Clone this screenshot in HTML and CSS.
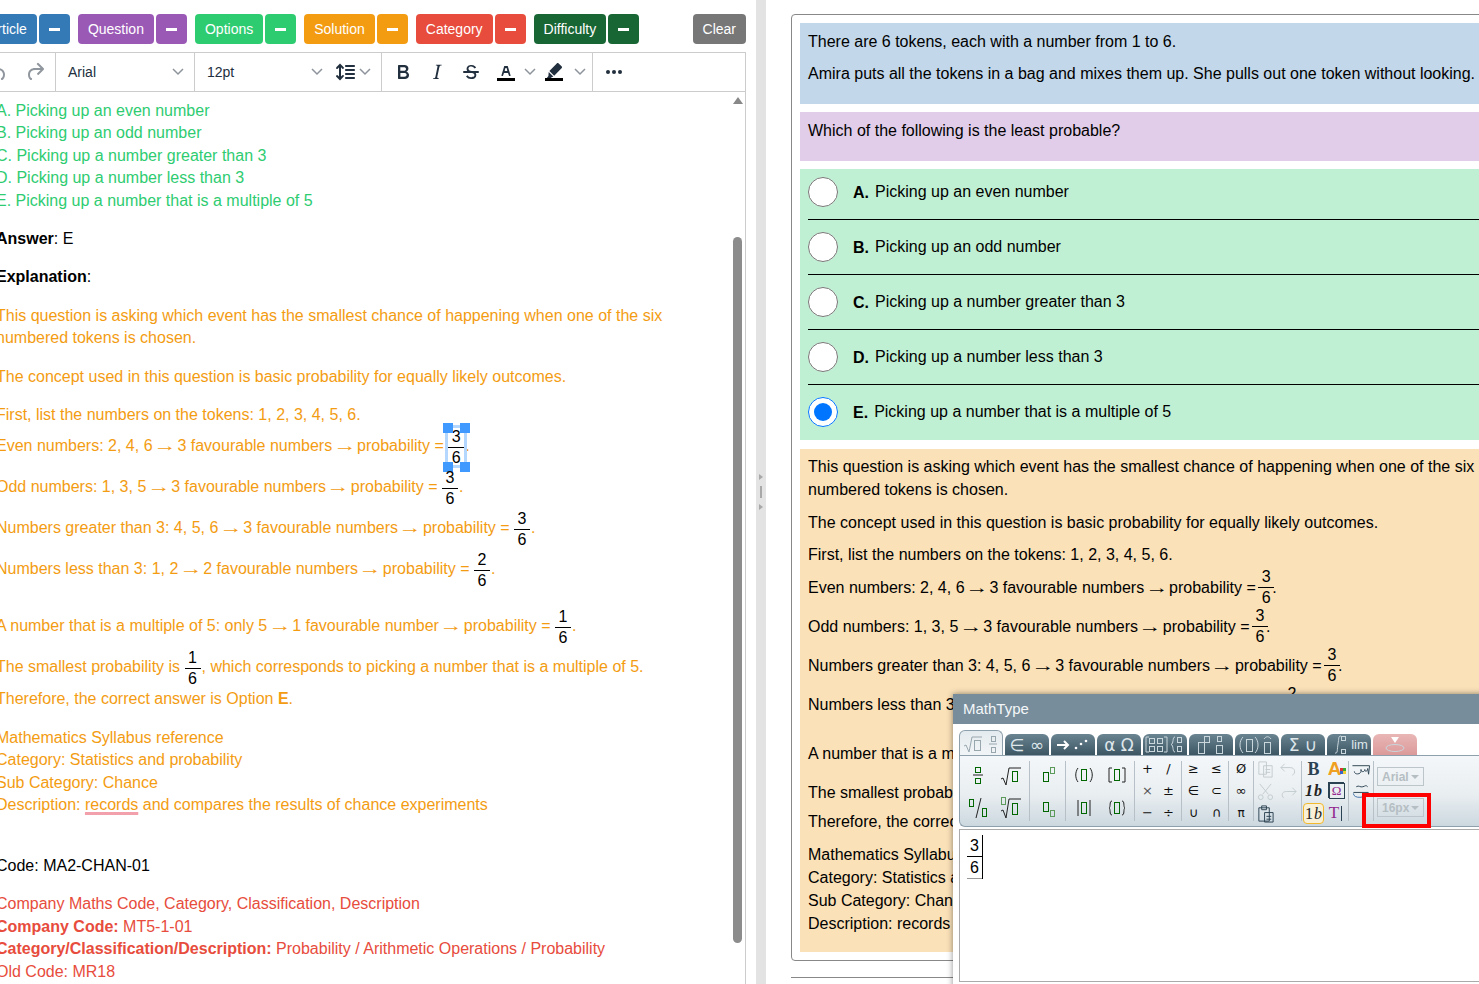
FILE: index.html
```html
<!DOCTYPE html>
<html>
<head>
    <title>Question Editor</title>
    <link rel="stylesheet" href="styles.css">
</head>
<body>
    <div class="left-pane">
        <div class="btn-row">
            <div class="btn-group blue"><button>Article</button><button class="minus"><span></span></button></div>
            <div class="btn-group purple"><button>Question</button><button class="minus"><span></span></button></div>
            <div class="btn-group green"><button>Options</button><button class="minus"><span></span></button></div>
            <div class="btn-group orange"><button>Solution</button><button class="minus"><span></span></button></div>
            <div class="btn-group red"><button>Category</button><button class="minus"><span></span></button></div>
            <div class="btn-group dark"><button>Difficulty</button><button class="minus"><span></span></button></div>
            <div class="btn-group grey clear"><button>Clear</button></div>
        </div>

        <div class="toolbar">
            <div class="tb-group history">
                <svg class="ic off" viewBox="0 0 24 24"><path d="M6.4 8H12c3.7 0 6.2 2 6.8 5.1.6 2.7-.4 5.6-2.3 6.8a1 1 0 0 1-1-1.8c1.1-.6 1.8-2.7 1.4-4.6-.5-2.1-2.1-3.5-4.9-3.5H6.4l3.3 3.3a1 1 0 1 1-1.4 1.4l-5-5a1 1 0 0 1 0-1.4l5-5a1 1 0 0 1 1.4 1.4L6.4 8z"/></svg>
                <svg class="ic off" viewBox="0 0 24 24"><path d="M17.6 10H12c-2.8 0-4.4 1.4-4.9 3.5-.4 2 .3 4 1.4 4.6a1 1 0 1 1-1 1.8c-2-1.2-2.9-4.1-2.3-6.8.6-3 3-5.1 6.8-5.1h5.6l-3.3-3.3a1 1 0 1 1 1.4-1.4l5 5a1 1 0 0 1 0 1.4l-5 5a1 1 0 0 1-1.4-1.4l3.3-3.3z"/></svg>
            </div>
            <div class="tb-select font-select"><span>Arial</span><svg class="chev" viewBox="0 0 14 10"><path d="M2 2l5 5 5-5"/></svg></div>
            <div class="tb-group size-group">
                <div class="tb-select size-select"><span>12pt</span><svg class="chev" viewBox="0 0 14 10"><path d="M2 2l5 5 5-5"/></svg></div>
                <svg class="ic line-ic" viewBox="0 0 24 24"><path d="M21 5a1 1 0 0 1 .1 2H13a1 1 0 0 1-.1-2H21zm0 4a1 1 0 0 1 .1 2H13a1 1 0 0 1-.1-2H21zm0 4a1 1 0 0 1 .1 2H13a1 1 0 0 1-.1-2H21zm0 4a1 1 0 0 1 .1 2H13a1 1 0 0 1-.1-2H21zM7 3.6l3.7 3.7a1 1 0 0 1-1.3 1.5h-.1L8 7.3v9.2l1.3-1.3a1 1 0 0 1 1.3 0h.1c.4.4.4 1 0 1.3v.1L7 20.4l-3.7-3.7a1 1 0 0 1 1.3-1.5h.1L6 16.5V7.4L4.7 8.7a1 1 0 0 1-1.3 0h-.1a1 1 0 0 1 0-1.3v-.1L7 3.6z"/></svg>
                <svg class="chev" viewBox="0 0 14 10"><path d="M2 2l5 5 5-5"/></svg>
            </div>
            <div class="tb-group format-group">
                <span class="tb-btn"><svg class="ic" viewBox="0 0 24 24"><path d="M7.8 19c-.3 0-.5 0-.6-.2l-.2-.5V5.7c0-.2 0-.4.2-.5l.6-.2h5c1.5 0 2.7.3 3.5 1 .7.6 1.1 1.4 1.1 2.5a3 3 0 0 1-.6 1.9c-.4.6-1 1-1.6 1.2.4.1.9.3 1.3.6s.8.7 1 1.2c.4.4.5 1 .5 1.6 0 1.3-.4 2.3-1.3 3-.8.7-2.1 1-3.8 1H7.8zm5-8.3c.6 0 1.2-.1 1.6-.5.4-.3.6-.7.6-1.3 0-1.1-.8-1.7-2.3-1.7H9.3v3.5h3.4zm.5 6c.7 0 1.3-.1 1.7-.4.4-.4.6-.9.6-1.5s-.2-1-.7-1.4c-.4-.3-1-.4-2-.4H9.4v3.8h4z"/></svg></span>
                <span class="tb-btn"><svg class="ic" viewBox="0 0 24 24"><path d="M16.7 4.7l-.1.9h-.3c-.6 0-1 0-1.4.3-.3.3-.4.6-.5 1.1l-2.1 9.8v.6c0 .5.4.8 1.4.8h.2l-.2.8H8l.2-.8h.2c1.1 0 1.8-.5 2-1.5l2-9.8.1-.5c0-.6-.4-.8-1.4-.8h-.3l.2-.9h5.8z"/></svg></span>
                <span class="tb-btn"><svg class="ic" viewBox="0 0 24 24"><path d="M15.6 8.5c-.5-.7-1-1.1-1.3-1.3-.6-.4-1.3-.6-2-.6-2.7 0-2.8 1.7-2.8 2.1 0 1.6 1.8 2 3.2 2.3 4.4.9 4.6 2.8 4.6 3.9 0 1.4-.7 4.1-5 4.1A6.2 6.2 0 0 1 7 16.4l1.5-1.1c.4.6 1.6 2 3.7 2 1.6 0 2.5-.4 3-1.2.4-.8.3-2-.8-2.6-.7-.4-1.6-.7-2.9-1-1-.2-3.9-.8-3.9-3.6C7.6 6 10.3 5 12.4 5c2.9 0 4.2 1.6 4.7 2.4l-1.5 1.1z"/><path d="M5 11h14a1 1 0 0 1 0 2H5a1 1 0 0 1 0-2z"/></svg></span>
                <span class="tb-btn spaced"><svg class="ic" viewBox="0 0 24 24"><path d="M8.7 16h-.8a.5.5 0 0 1-.5-.6l2.7-9c.1-.3.3-.4.5-.4h2.8c.2 0 .4.1.5.4l2.7 9a.5.5 0 0 1-.5.6h-.8a.5.5 0 0 1-.4-.4l-.7-2.2c0-.3-.3-.4-.5-.4h-3.4c-.2 0-.4.1-.5.4l-.7 2.2c0 .3-.2.4-.4.4zm2.6-7.6l-.6 2a.5.5 0 0 0 .5.6h1.6a.5.5 0 0 0 .5-.6l-.6-2c0-.3-.3-.4-.5-.4h-.4c-.2 0-.4.1-.5.4z"/><path class="black" d="M3 18h18v3H3z"/></svg></span>
                <svg class="chev" viewBox="0 0 14 10"><path d="M2 2l5 5 5-5"/></svg>
                <span class="tb-btn"><svg class="ic" viewBox="0 0 24 24"><path d="M16.4 3.3l3.4 3.3c.4.4.4 1 0 1.4l-7.6 7.7-4.8-4.8 7.6-7.6c.4-.4 1-.4 1.4 0zM6.7 11.9l4.6 4.6-2 .9-1.1 1H4.4l2-2.4.3-4.1z"/><path class="black" d="M3 18h18v3H3z"/></svg></span>
                <svg class="chev last" viewBox="0 0 14 10"><path d="M2 2l5 5 5-5"/></svg>
            </div>
            <div class="tb-group more-group">
                <svg class="ic" viewBox="0 0 24 24"><circle cx="6" cy="12" r="2"/><circle cx="12" cy="12" r="2"/><circle cx="18" cy="12" r="2"/></svg>
            </div>
        </div>

        <div class="editor">
            <p class="c-green">A. Picking up an even number<br>B. Picking up an odd number<br>C. Picking up a number greater than 3<br>D. Picking up a number less than 3<br>E. Picking up a number that is a multiple of 5</p>
            <p><b>Answer</b>: E</p>
            <p><b>Explanation</b>:</p>
            <p class="c-orange">This question is asking which event has the smallest chance of happening when one of the six numbered tokens is chosen.</p>
            <p class="c-orange">The concept used in this question is basic probability for equally likely outcomes.</p>
            <p class="c-orange">First, list the numbers on the tokens: 1, 2, 3, 4, 5, 6.<br>
                Even numbers: 2, 4, 6 <span class="arr">→</span> 3 favourable numbers <span class="arr">→</span> probability = <span class="frac selected"><i>3</i><i>6</i><em class="h1"></em><em class="h2"></em><em class="h3"></em><em class="h4"></em></span>.<br>
                Odd numbers: 1, 3, 5 <span class="arr">→</span> 3 favourable numbers <span class="arr">→</span> probability = <span class="frac"><i>3</i><i>6</i></span>.<br>
                Numbers greater than 3: 4, 5, 6 <span class="arr">→</span> 3 favourable numbers <span class="arr">→</span> probability = <span class="frac"><i>3</i><i>6</i></span>.<br>
                Numbers less than 3: 1, 2 <span class="arr">→</span> 2 favourable numbers <span class="arr">→</span> probability = <span class="frac"><i>2</i><i>6</i></span>.</p>
            <p class="c-orange">A number that is a multiple of 5: only 5 <span class="arr">→</span> 1 favourable number <span class="arr">→</span> probability = <span class="frac"><i>1</i><i>6</i></span>.<br>
                The smallest probability is <span class="frac"><i>1</i><i>6</i></span>, which corresponds to picking a number that is a multiple of 5.<br>
                Therefore, the correct answer is Option <b>E</b>.</p>
            <p class="c-orange">Mathematics Syllabus reference<br>Category: Statistics and probability<br>Sub Category: Chance<br>Description: <span class="spell">records</span> and compares the results of chance experiments<br>&nbsp;</p>
            <p>Code: MA2-CHAN-01</p>
            <p class="c-red">Company Maths Code, Category, Classification, Description<br><b>Company Code:</b> MT5-1-01<br><b>Category/Classification/Description:</b> Probability / Arithmetic Operations / Probability<br>Old Code: MR18</p>
        </div>

        <div class="scroll-arrow"></div>
        <div class="scroll-thumb"></div>
    </div>

    <div class="gutter">
        <span class="gutter-arrow"></span>
        <span class="gutter-handle"></span>
        <span class="gutter-arrow"></span>
    </div>

    <div class="right-pane">
        <div class="card">
            <div class="sec sec-blue">
                <p>There are 6 tokens, each with a number from 1 to 6.</p>
                <p>Amira puts all the tokens in a bag and mixes them up. She pulls out one token without looking.</p>
            </div>
            <div class="sec sec-purple">
                <p>Which of the following is the least probable?</p>
            </div>
            <div class="sec-options">
                <label class="opt"><input type="radio" name="ans"><b>A.</b><span>Picking up an even number</span></label>
                <label class="opt"><input type="radio" name="ans"><b>B.</b><span>Picking up an odd number</span></label>
                <label class="opt"><input type="radio" name="ans"><b>C.</b><span>Picking up a number greater than 3</span></label>
                <label class="opt"><input type="radio" name="ans"><b>D.</b><span>Picking up a number less than 3</span></label>
                <label class="opt"><input type="radio" name="ans" checked><b>E.</b><span>Picking up a number that is a multiple of 5</span></label>
            </div>
            <div class="sec sec-peach">
                <p>This question is asking which event has the smallest chance of happening when one of the six numbered tokens is chosen.</p>
                <p>The concept used in this question is basic probability for equally likely outcomes.</p>
                <p>First, list the numbers on the tokens: 1, 2, 3, 4, 5, 6.</p>
                <p class="mline mt-6">Even numbers: 2, 4, 6 <span class="arr">→</span> 3 favourable numbers <span class="arr">→</span> probability = <span class="frac"><i>3</i><i>6</i></span>.</p>
                <p class="mline">Odd numbers: 1, 3, 5 <span class="arr">→</span> 3 favourable numbers <span class="arr">→</span> probability = <span class="frac"><i>3</i><i>6</i></span>.</p>
                <p class="mline">Numbers greater than 3: 4, 5, 6 <span class="arr">→</span> 3 favourable numbers <span class="arr">→</span> probability = <span class="frac"><i>3</i><i>6</i></span>.</p>
                <p class="mline">Numbers less than 3: 1, 2 <span class="arr">→</span> 2 favourable numbers <span class="arr">→</span> probability = <span class="frac"><i>2</i><i>6</i></span>.</p>
                <p class="mline mt-20">A number that is a multiple of 5: only 5 <span class="arr">→</span> 1 favourable number <span class="arr">→</span> probability = <span class="frac"><i>1</i><i>6</i></span>.</p>
                <p class="mline">The smallest probability is <span class="frac"><i>1</i><i>6</i></span>, which corresponds to picking a number that is a multiple of 5.</p>
                <p class="mt-3">Therefore, the correct answer is Option E.</p>
                <p>Mathematics Syllabus reference<br>Category: Statistics and probability<br>Sub Category: Chance<br>Description: records and compares the results of chance experiments</p>
            </div>
        </div>
        <div class="rule"></div>
    </div>

    <div class="mathtype">
        <div class="mt-title">MathType</div>
        <div class="mt-tabs">
            <div class="tab active"><svg viewBox="0 0 44 24"><path d="M5 15l2-1 3 7 3-15h10"/><rect x="15" y="9" width="6" height="10"/><rect x="32" y="5" width="4" height="5"/><path d="M30 13h8"/><rect x="32" y="16" width="4" height="5"/></svg></div>
            <div class="tab glyph">∈ ∞</div>
            <div class="tab"><svg viewBox="0 0 44 21"><path class="thick" d="M6 11h11M13 7l4 4-4 4"/><circle class="dot" cx="25" cy="14" r="1.3"/><circle class="dot" cx="30" cy="10" r="1.3"/><circle class="dot" cx="35" cy="7" r="1.3"/></svg></div>
            <div class="tab glyph">α Ω</div>
            <div class="tab"><svg viewBox="0 0 44 21"><path d="M6 3H3v15h3M21 3h3v15h-3"/><rect x="6" y="4" width="5" height="5"/><rect x="14" y="4" width="5" height="5"/><rect x="6" y="12" width="5" height="5"/><rect x="14" y="12" width="5" height="5"/><path d="M32 3c-3 0-1 7-4 7.5 3 .5 1 7.5 4 7.5"/><rect x="34" y="3" width="4" height="5"/><rect x="34" y="12" width="4" height="5"/></svg></div>
            <div class="tab"><svg viewBox="0 0 44 21"><rect x="9" y="8" width="6" height="11"/><rect x="15" y="2" width="5" height="6"/><rect x="28" y="2" width="4" height="5"/><rect x="27" y="11" width="6" height="8"/></svg></div>
            <div class="tab"><svg viewBox="0 0 44 21"><path d="M8 3c-4 4-4 12 0 16M20 3c4 4 4 12 0 16"/><rect x="11" y="5" width="6" height="12"/><path d="M29 5c2-3 5-3 7 0"/><rect x="29" y="8" width="6" height="11"/></svg></div>
            <div class="tab glyph">Σ ∪</div>
            <div class="tab"><svg viewBox="0 0 24 21"><path d="M8 19c3 1 2-4 3-9s0-8 3-8"/><rect x="14" y="2" width="4" height="4"/><rect x="14" y="15" width="4" height="4"/></svg><span class="lim">lim</span></div>
            <div class="tab pink"><svg viewBox="0 0 44 21"><path class="fill" d="M18 3h8l-4 6z"/><ellipse cx="22" cy="14" rx="9" ry="3.5"/></svg></div>
        </div>
        <div class="mt-panel">
            <div class="tg g-1 two">
                <svg class="t" viewBox="0 0 30 30"><rect class="bx" x="12" y="7" width="5" height="5"/><path d="M10 15h10" class="ln"/><rect class="bx" x="12" y="18" width="5" height="5"/></svg>
                <svg class="t" viewBox="0 0 30 30"><path class="ln" d="M5 19l2-1 3 7 3-17h12"/><rect class="bx" x="16" y="11" width="5" height="10"/></svg>
                <svg class="t" viewBox="0 0 30 30"><rect class="bx" x="6" y="6" width="4" height="7"/><path class="ln" d="M18 5l-5 20"/><rect class="bx" x="19" y="15" width="4" height="8"/></svg>
                <svg class="t" viewBox="0 0 30 30"><rect class="bx lt" x="5" y="4" width="4" height="7"/><path class="ln" d="M5 18l2-1 3 8 3-19h12"/><rect class="bx" x="16" y="10" width="5" height="11"/></svg>
            </div>
            <span class="sep"></span>
            <div class="tg g-2 two">
                <svg class="t" viewBox="0 0 30 30"><rect class="bx" x="10" y="12" width="5" height="9"/><rect class="bx lt" x="17" y="7" width="4" height="6"/></svg>
                <svg class="t" viewBox="0 0 30 30"><rect class="bx" x="10" y="9" width="5" height="9"/><rect class="bx lt" x="17" y="17" width="4" height="6"/></svg>
            </div>
            <span class="sep"></span>
            <div class="tg g-3 two">
                <svg class="t" viewBox="0 0 30 30"><path class="ln" d="M9 8c-3 4-3 10 0 14M21 8c3 4 3 10 0 14"/><rect class="bx" x="12" y="9" width="5" height="11"/></svg>
                <svg class="t" viewBox="0 0 30 30"><path class="ln" d="M10 8H7v14h3M20 8h3v14h-3"/><rect class="bx" x="12" y="9" width="5" height="11"/></svg>
                <svg class="t" viewBox="0 0 30 30"><path class="ln" d="M9 7v16M21 7v16"/><rect class="bx" x="12" y="9" width="5" height="11"/></svg>
                <svg class="t" viewBox="0 0 30 30"><path class="ln" d="M10 8c-3 0-1 6-3 7 2 1 0 7 3 7M20 8c3 0 1 6 3 7-2 1 0 7-3 7"/><rect class="bx" x="12" y="9" width="5" height="11"/></svg>
            </div>
            <span class="sep"></span>
            <div class="tg g-4 sym"><span>+</span><span>/</span><span class="soft">×</span><span>±</span><span>−</span><span>÷</span></div>
            <span class="sep"></span>
            <div class="tg g-5 sym"><span>≥</span><span>≤</span><span>∈</span><span>⊂</span><span>∪</span><span>∩</span></div>
            <span class="sep"></span>
            <div class="tg g-6 sym"><span>Ø</span><span>∞</span><span class="small">π</span></div>
            <span class="sep"></span>
            <div class="tg g-7 sym">
                <svg class="s off-ic" viewBox="0 0 20 20"><path d="M3 2h8v13H3zM8 6h9v12H8zM10 10h5M10 13h5"/></svg>
                <svg class="s off-ic" viewBox="0 0 20 20"><path d="M6 4L2 8l4 4M2 8h10c5 0 6 6 2 8"/></svg>
                <svg class="s off-ic" viewBox="0 0 20 20"><path d="M4 2l9 11M16 2L7 13"/><circle cx="5" cy="16" r="2.5"/><circle cx="15" cy="16" r="2.5"/></svg>
                <svg class="s off-ic" viewBox="0 0 20 20"><path d="M14 6l4 4-4 4M18 10H8c-5 0-6 4-3 7"/></svg>
                <svg class="s on-ic" viewBox="0 0 20 20"><path d="M3 4h11v14H3zM6 2h5v4H6zM9 9h9v10H9zM11 13h5M11 16h5"/></svg>
            </div>
            <span class="sep"></span>
            <div class="tg g-8 sym">
                <span class="serif-b">B</span>
                <span class="color-a">A<em class="sq sq-r"></em><em class="sq sq-g"></em><em class="sq sq-b"></em><em class="sq sq-y"></em></span>
                <span class="one-b">1<i>b</i></span>
                <span class="omega">Ω</span>
                <span class="one-b picked">1<i>b</i></span>
                <span class="t-cursor">T<u></u></span>
            </div>
            <span class="sep"></span>
            <div class="tg g-9 sym">
                <svg class="s wide" viewBox="0 0 20 20"><path d="M1 6h18M3 12c0 4 7 3 7 0v-2c0 3 4 3 4 0 0 3 3 2 3-1l1 6 1-9"/></svg>
                <svg class="s wide" viewBox="0 0 20 20"><path d="M5 5c3-2 4 1 7 0s3-2 5 0M2 11h16"/><path class="blue-stroke" d="M2 12c0 6 13 5 16 0"/></svg>
            </div>
            <span class="sep"></span>
            <div class="dropdowns">
                <div class="dd">Arial<span></span></div>
                <div class="dd">16px<span></span></div>
            </div>
        </div>
        <div class="mt-editor">
            <span class="frac big"><i>3</i><i>6</i></span><span class="caret"></span>
        </div>
        <div class="red-box"></div>
    </div>
</body>
</html>
```

FILE: styles.css
```css
html, body {
    margin: 0;
    padding: 0;
    height: 100%;
}

body {
    position: relative;
    display: flex;
    width: 1479px;
    height: 984px;
    overflow: hidden;
    background-color: #fff;
    color: #000;
    font-family: "Liberation Sans", Arial, sans-serif;
    font-size: 16px;
}

p {
    margin: 0;
}

/* left: editor pane, scrolled a little to the right */
.left-pane {
    position: relative;
    flex: 0 0 756px;
    width: 756px;
    overflow: hidden;
    padding-top: 14px;
    box-sizing: border-box;
}

.btn-row {
    display: flex;
    gap: 8px;
    width: 768px;
    margin-left: -22px;
    height: 30px;
}

.btn-group {
    display: flex;
    gap: 2px;
}

.btn-group.clear {
    margin-left: auto;
}

.btn-group button {
    height: 30px;
    padding: 0 10px;
    border: none;
    border-radius: 4px;
    color: #fff;
    font-family: "Liberation Sans", Arial, sans-serif;
    font-size: 14px;
}

.btn-group .minus {
    width: 31px;
    padding: 0;
    display: flex;
    align-items: center;
    justify-content: center;
}

.minus span {
    width: 11px;
    height: 3px;
    background-color: #fff;
}

.blue button { background-color: #337ab7; }
.purple button { background-color: #9b59b6; }
.green button { background-color: #2ecc71; }
.orange button { background-color: #f39c12; }
.red button { background-color: #e74c3c; }
.dark button { background-color: #196635; }
.grey button { background-color: #777; }

.toolbar {
    display: flex;
    width: 776px;
    height: 40px;
    margin-top: 8px;
    margin-left: -30px;
    box-sizing: border-box;
    border: 1px solid #ccc;
    color: #222f3e;
    font-size: 14px;
}

.tb-group {
    display: flex;
    align-items: center;
    border-right: 1px solid #ccc;
    box-sizing: border-box;
}

.history {
    width: 85px;
    padding-left: 15px;
    gap: 13px;
}

.ic {
    width: 24px;
    height: 24px;
    flex: none;
    fill: #222f3e;
}

.ic.off {
    opacity: .5;
}

.ic .black {
    fill: #000;
}

.chev {
    width: 14px;
    height: 10px;
    flex: none;
    fill: none;
    stroke: #8d949c;
    stroke-width: 1.5;
}

.chev.last {
    margin-left: 2px;
}

.tb-select {
    display: flex;
    align-items: center;
    justify-content: space-between;
    box-sizing: border-box;
}

.font-select {
    width: 139px;
    padding: 0 9px 0 12px;
    border-right: 1px solid #ccc;
}

.size-group {
    width: 187px;
}

.size-select {
    width: 129px;
    padding-left: 12px;
}

.line-ic {
    margin-left: 9px;
    margin-right: 1px;
}

.format-group {
    width: 211px;
    padding-left: 4px;
}

.tb-btn {
    display: flex;
    justify-content: center;
    width: 34px;
}

.tb-btn.spaced {
    margin-left: 1px;
}

.more-group {
    padding-left: 9px;
    border-right: none;
}

.editor {
    width: 746px;
    height: 900px;
    box-sizing: border-box;
    padding: 8px 20px 0 0;
    border-right: 1px solid #ccc;
    line-height: 22.4px;
}

.editor p {
    margin: 0 0 16px -4px;
}

.c-green { color: #2ecc71; }
.c-orange { color: #f39c12; }
.c-red { color: #e74c3c; }

.spell {
    text-decoration: underline;
    text-decoration-color: #f2a0ac;
    text-decoration-thickness: 3px;
    text-underline-offset: 2px;
}

.arr {
    display: inline-block;
    transform: scaleX(1.45);
}

.frac {
    display: inline-flex;
    flex-direction: column;
    justify-content: center;
    width: 16px;
    height: 41px;
    vertical-align: 10px;
    color: #000;
    text-align: center;
    line-height: 20px;
}

.frac i {
    display: block;
    position: relative;
    top: 1px;
    font-style: normal;
    height: 20px;
}

.frac i:first-child {
    border-bottom: 1px solid #000;
}

.editor .frac {
    margin-right: 1px;
}

.frac.selected {
    position: relative;
}

.frac.selected::before {
    content: "";
    position: absolute;
    left: -3px;
    right: -3px;
    top: -1px;
    bottom: -1px;
    border: 3px solid #b4d7ff;
}

.frac.selected em {
    position: absolute;
    width: 10px;
    height: 10px;
    background-color: #4099ff;
}

.h1 { left: -5px; top: -3px; }
.h2 { right: -6px; top: -3px; }
.h3 { left: -5px; bottom: -5px; }
.h4 { right: -6px; bottom: -5px; }

.scroll-arrow {
    position: absolute;
    left: 733px;
    top: 97px;
    width: 0;
    height: 0;
    border-left: 5px solid transparent;
    border-right: 5px solid transparent;
    border-bottom: 7px solid #888;
}

.scroll-thumb {
    position: absolute;
    left: 733px;
    top: 237px;
    width: 9px;
    height: 706px;
    border-radius: 5px;
    background-color: #8c8c8c;
}

/* splitter */
.gutter {
    flex: 0 0 10px;
    display: flex;
    flex-direction: column;
    align-items: center;
    justify-content: center;
    gap: 6px;
    background-color: #e3e3e3;
}

.gutter-arrow {
    width: 0;
    height: 0;
    border-top: 3px solid transparent;
    border-bottom: 3px solid transparent;
    border-left: 4px solid #a8a8a8;
}

.gutter-handle {
    width: 2px;
    height: 12px;
    background-color: #a8a8a8;
}

/* right: preview */
.right-pane {
    flex: none;
    width: 713px;
    padding: 14px 0 0 25px;
    box-sizing: border-box;
    overflow: hidden;
    line-height: 1.42857;
}

.card {
    width: 720px;
    box-sizing: border-box;
    padding: 8px;
    border: 1px solid #888;
    border-radius: 4px;
    display: flex;
    flex-direction: column;
    gap: 8px;
}

.sec {
    width: 690px;
    box-sizing: border-box;
    padding: 8px 8px 18px;
}

.sec p + p {
    margin-top: 9.14px;
}

.sec-blue { background-color: #c2d7e9; }
.sec-purple { background-color: #e1cde9; }

.sec-peach {
    margin-top: 1px;
    padding: 6.5px 8px 17px;
    background-color: #fae1b8;
    line-height: 23px;
}

.sec-peach p + p {
    margin-top: 9.5px;
}

.sec-peach .mline + .mline {
    margin-top: 10px;
}

.sec-options {
    width: 690px;
    background-color: #c0f0d4;
}

.opt {
    display: flex;
    align-items: center;
    gap: 6px;
    height: 30px;
    margin-left: 8px;
    padding: 12px 0;
    border-bottom: 1px solid #000;
}

.opt:first-child {
    padding-top: 8px;
}

.opt:last-child {
    padding-bottom: 13px;
    border-bottom: none;
}

.opt input {
    width: 30px;
    height: 30px;
    margin: 0 9px 0 0;
}

.opt b {
    position: relative;
    top: 2px;
}

.opt span {
    position: relative;
    top: 1px;
}

.mline {
    height: 29px;
    line-height: 29px;
}

.sec .frac {
    margin: -6px -2px;
    vertical-align: middle;
}

.sec .frac i {
    top: -1px;
}

.sec-peach p.mt-6 { margin-top: 7px; }
.sec-peach .mline + .mline.mt-20 { margin-top: 20px; }
.sec-peach p.mt-3 { margin-top: 3px; }

.rule {
    width: 100%;
    height: 1px;
    margin-top: 16px;
    background-color: #888;
}

/* MathType dialog floats over the preview */
.mathtype {
    position: absolute;
    left: 953px;
    top: 694px;
    width: 560px;
    height: 300px;
    background-color: #fff;
    box-shadow: 0 0 6px rgba(0, 0, 0, .45);
}

.mt-title {
    height: 30px;
    padding-left: 10px;
    background-color: #778d9b;
    color: #f4f7f9;
    font-size: 15px;
    line-height: 30px;
}

.mt-tabs {
    position: relative;
    z-index: 1;
    display: flex;
    align-items: flex-end;
    gap: 2px;
    height: 25px;
    margin: 6px 0 0 6px;
}

.tab {
    display: flex;
    align-items: center;
    justify-content: center;
    width: 44px;
    height: 21px;
    border-radius: 6px 6px 0 0;
    background: linear-gradient(#6a8492, #3d5664);
    color: #dfe7eb;
    font-family: "DejaVu Sans", sans-serif;
    font-size: 17px;
    white-space: nowrap;
    box-sizing: border-box;
}

.tab svg {
    width: 44px;
    height: 21px;
    flex: none;
    fill: none;
    stroke: #c9d6dc;
    stroke-width: 1;
}

.tab rect {
    shape-rendering: crispEdges;
}

.tab .thick {
    stroke: #fff;
    stroke-width: 2;
}

.tab .dot, .tab .fill {
    fill: #fff;
    stroke: none;
}

.tab.active {
    height: 25px;
    border: 1px solid #8ea0ac;
    border-bottom: none;
    background: linear-gradient(#e4ebee, #f2f5f7);
}

.tab.active svg {
    height: 24px;
    stroke: #98a6ae;
}

.tab.pink {
    background: linear-gradient(#e9b6b6, #dc9a9a);
}

.tab:nth-child(9) svg {
    width: 24px;
}

.tab .lim {
    font-family: "Liberation Sans", sans-serif;
    font-size: 13px;
    margin-right: 3px;
}

.mt-panel {
    display: flex;
    align-items: flex-start;
    height: 72px;
    margin-left: 6px;
    box-sizing: border-box;
    border: 1px solid #8ea0ac;
    border-right: none;
    border-radius: 0 0 0 6px;
    background: linear-gradient(#f4f7f9, #e9eef1 55%, #ccd8df);
    font-family: "DejaVu Sans", sans-serif;
    color: #111;
}

.sep {
    flex: none;
    width: 1px;
    height: 60px;
    margin-top: 5px;
    background-color: #b6c0c6;
}

.tg {
    display: grid;
    flex: none;
    margin-top: 2px;
    justify-items: center;
    align-items: center;
}

.g-1 { width: 69px; padding-left: 1px; box-sizing: border-box; grid-template-columns: 33px 33px; }
.g-2 { width: 35px; grid-template-columns: 35px; }
.g-3 { width: 68px; grid-template-columns: 33px 33px; padding-left: 1px; box-sizing: border-box; }
.g-4 { width: 46px; grid-template-columns: 21px 21px; padding-left: 2px; box-sizing: border-box; }
.g-5 { width: 46px; grid-template-columns: 23px 23px; }
.g-6 { width: 24px; grid-template-columns: 24px; }
.g-7 { width: 47px; grid-template-columns: 23px 23px; }
.g-8 { width: 46px; grid-template-columns: 23px 23px; }
.g-9 { width: 24px; grid-template-columns: 24px; }

.two {
    grid-auto-rows: 33px;
}

.sym {
    grid-auto-rows: 22px;
    font-size: 13px;
    line-height: 22px;
}

.sym .soft {
    color: #555;
}

.sym .small {
    font-size: 12px;
}

.t {
    width: 30px;
    height: 30px;
    fill: none;
}

.t .bx {
    stroke: #060;
    stroke-width: 1;
    shape-rendering: crispEdges;
}

.t .bx.lt {
    stroke: #5c9a5c;
}

.t .ln {
    stroke: #222;
    stroke-width: 1;
}

.s {
    width: 19px;
    height: 19px;
    fill: none;
    stroke-width: 1;
}

.s.wide {
    width: 22px;
}

.off-ic {
    stroke: #c3cbcf;
}

.on-ic {
    stroke: #2b4252;
}

.g-9 .s {
    stroke: #2b4252;
}

.g-9 .blue-stroke {
    stroke: #3f6fa8;
}

.serif-b {
    font-family: "Liberation Serif", serif;
    font-size: 18px;
    font-weight: bold;
    color: #2b4252;
}

.color-a {
    position: relative;
    margin-right: 4px;
    font-family: "Liberation Sans", sans-serif;
    font-size: 19px;
    font-weight: bold;
    color: #f0a020;
}

.sq {
    position: absolute;
    width: 3px;
    height: 3px;
}

.sq-r { right: -2px; top: 10px; background-color: #d33; }
.sq-g { right: -5px; top: 10px; background-color: #3a3; }
.sq-b { right: -2px; top: 13px; background-color: #36c; }
.sq-y { right: -5px; top: 13px; background-color: #ec3; }

.one-b {
    font-family: "Liberation Serif", serif;
    font-size: 16px;
    font-style: italic;
    font-weight: bold;
    color: #222;
}

.one-b i {
    margin-left: 1px;
}

.one-b.picked {
    width: 21px;
    height: 21px;
    box-sizing: border-box;
    border: 1px solid #f2b92c;
    border-radius: 4px;
    background-color: #f8f1d8;
    font-style: normal;
    font-weight: normal;
    text-align: center;
    line-height: 19px;
}

.omega {
    width: 14px;
    height: 14px;
    border: 1px solid #2b4252;
    box-shadow: -1px -1px 0 #2b4252;
    color: #93288f;
    font-family: "Liberation Serif", serif;
    font-size: 13px;
    line-height: 14px;
    text-align: center;
}

.t-cursor {
    display: flex;
    align-items: center;
    gap: 2px;
    margin-right: 2px;
    color: #93288f;
    font-family: "Liberation Serif", serif;
    font-size: 17px;
}

.t-cursor u {
    width: 1px;
    height: 15px;
    background-color: #2b4252;
}

.dropdowns {
    display: flex;
    flex-direction: column;
    gap: 12px;
    margin: 11px 0 0 3px;
}

.dd {
    display: flex;
    align-items: center;
    justify-content: space-between;
    width: 47px;
    height: 19px;
    box-sizing: border-box;
    padding: 0 4px;
    border: 1px solid #bcc5ca;
    color: #b5bec3;
    font-family: "Liberation Sans", sans-serif;
    font-size: 12px;
    font-weight: bold;
}

.dd span {
    width: 0;
    height: 0;
    border-left: 4px solid transparent;
    border-right: 4px solid transparent;
    border-top: 4px solid #b5bec3;
}

.mt-editor {
    display: flex;
    align-items: flex-start;
    height: 153px;
    margin: 2px 0 0 6px;
    box-sizing: border-box;
    padding: 5px 0 0 7px;
    border: 1px solid #aaa;
    border-right: none;
}

.frac.big {
    width: 15px;
    height: 44px;
    line-height: 21px;
    border-bottom: 1px solid #999;
    box-sizing: border-box;
}

.frac.big i {
    top: 0;
    height: 21px;
}

.caret {
    width: 1px;
    height: 44px;
    background-color: #000;
}

.red-box {
    position: absolute;
    left: 409px;
    top: 99px;
    width: 69px;
    height: 35px;
    box-sizing: border-box;
    border: 4px solid #f00;
}
```
